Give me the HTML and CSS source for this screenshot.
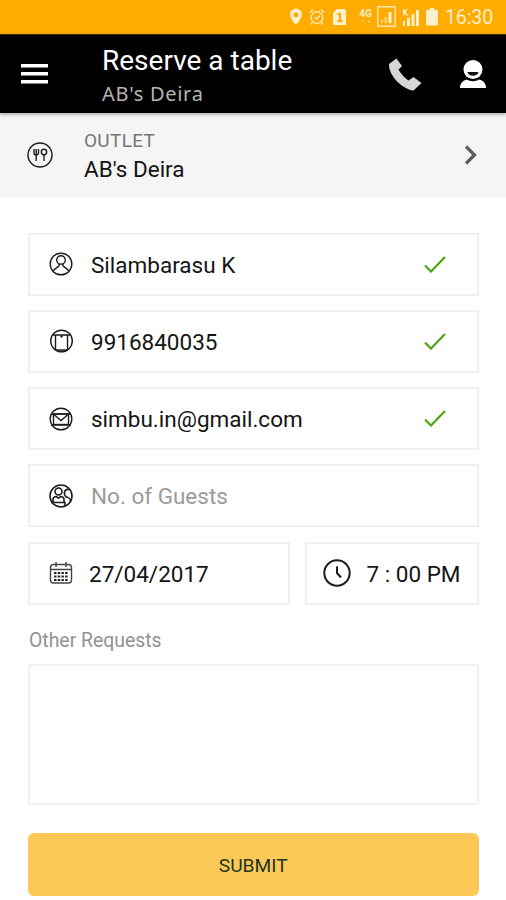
FILE: index.html
```html
<!DOCTYPE html>
<html lang="en">
<head>
<meta charset="utf-8">
<title>Reserve a table</title>
<link rel="stylesheet" href="styles.css">
</head>
<body>
<div class="status">
  <svg class="st-pin" width="14" height="18" viewBox="0 0 14 18"><path fill-rule="evenodd" d="M7 0.5A6 6 0 0 0 1 6.5C1 10.500 7 17 7 17S13 10.500 13 6.500A6 6 0 0 0 7 .5ZM7 4.200a2.500 2.500 0 1 1 0 5 2.500 2.500 0 0 1 0-5Z"/></svg>
  <svg class="st-alarm line" width="16" height="18" viewBox="0 0 16 18"><circle cx="8" cy="9.500" r="5.800"/><path d="M1 4.500 4 1.500M15 4.500 12 1.500M5.500 9l2 2 3.500-3.500M3.500 14.500 2 16.500M12.500 14.500 14 16.500"/></svg>
  <svg class="st-sim" width="13" height="18" viewBox="0 0 13 18"><path fill-rule="evenodd" d="M4 1H11.500L13 2.500V17H0V5ZM4.500 5V7H6V12H4.500V14H9.500V12H8V5Z"/></svg>
  <span class="st-net"><b>4G</b><svg width="12" height="5" viewBox="0 0 12 5"><path d="M1 1h4L3 4ZM7 4h4L9 1Z"/></svg></span>
  <svg class="st-box line" width="19" height="21" viewBox="0 0 19 21"><rect x=".8" y=".8" width="17.400" height="19.400"/><path class="solid faint" d="M4 14h2v3H4ZM7.500 11h2.500v6H7.500Z"/><path class="solid" d="M11.500 6h3v11h-3Z"/></svg>
  <svg class="st-signal" width="17" height="18" viewBox="0 0 17 18"><path d="M1 13h2v5H1ZM5 10h3v8H5ZM9.500 6h3v12h-3ZM14 2h3v16h-3ZM1 1h1.300v2L4 1h1.800L3.800 4l2.400 3.500H4.500L2.300 5v2.500H1Z"/></svg>
  <svg class="st-battery" width="12" height="18" viewBox="0 0 12 18"><path d="M3.500 0h5v2H12v15.500H0V2h3.500Z"/></svg>
  <span class="clock">16:30</span>
</div>
<header class="bar">
  <svg class="menu" width="27" height="20" viewBox="0 0 27 20"><path d="M0 0h27v3.500H0ZM0 8h27v3.500H0ZM0 16h27v3.500H0Z"/></svg>
  <div class="titles">
    <h1>Reserve a table</h1>
    <p>AB's Deira</p>
  </div>
  <svg class="phone" width="33" height="33" viewBox="0 0 33 33"><path d="M7.500.5 0 6C-.5 18 14 31.500 24.500 32.500L32.500 25 24.500 19 19.500 22.500C16 20 11.500 15.500 9.500 11.500L13 8Z"/></svg>
  <svg class="user" width="26" height="28" viewBox="0 0 26 28"><circle cx="13" cy="9.500" r="9.500"/><path d="M0 28c0-5 3-7.500 7-8.500 3 2.300 9 2.300 12 0 4 1 7 3.500 7 8.500Z"/><path class="smile" d="M7.500 12h11c-.5 5-10.500 5-11 0Z"/></svg>
</header>
<section class="outlet">
  <svg class="icon fork" width="26" height="26" viewBox="0 0 26 26"><circle cx="13" cy="13" r="12"/><path d="M7 7v4q0 2 2.200 2T11.500 11V7M9.200 7v12"/><circle cx="17" cy="10" r="2.700"/><path d="M17 12.700V19"/></svg>
  <div class="place">
    <span class="label">OUTLET</span>
    <span class="name">AB's Deira</span>
  </div>
  <svg class="chevron" width="14" height="20" viewBox="0 0 14 20"><path d="m2 1.500 8.500 8.500L2 18.500"/></svg>
</section>
<main class="form">
  <div class="field">
    <svg class="icon" width="24" height="24" viewBox="0 0 24 24"><circle cx="12" cy="12" r="10.800"/><circle cx="12" cy="8" r="4.300"/><path d="M4 19.500C6 16 9 15 10 14v-2M20 19.500C18 16 15 15 14 14v-2"/></svg>
    <span class="value">Silambarasu K</span>
    <svg class="check" width="22" height="17" viewBox="0 0 22 17"><path d="m1 9.500 6 6L21 1"/></svg>
  </div>
  <div class="field">
    <svg class="icon" width="24" height="24" viewBox="0 0 24 24"><circle cx="12.500" cy="12" r="10.800"/><path d="M6.500 20V6H18.500V20M4 6h17M7 21h11"/><path class="notch" d="M10.500 6.500h4L12.500 9Z"/></svg>
    <span class="value">9916840035</span>
    <svg class="check" width="22" height="17" viewBox="0 0 22 17"><path d="m1 9.500 6 6L21 1"/></svg>
  </div>
  <div class="field">
    <svg class="icon" width="24" height="24" viewBox="0 0 24 24"><circle cx="12" cy="12" r="10.800"/><rect x="4.500" y="7" width="15" height="10.500"/><path d="m5 7.500 7 6 7-6M2 7h20M2 18h20"/></svg>
    <span class="value">simbu.in@gmail.com</span>
    <svg class="check" width="22" height="17" viewBox="0 0 22 17"><path d="m1 9.500 6 6L21 1"/></svg>
  </div>
  <div class="field">
    <svg class="icon guests" width="24" height="24" viewBox="0 0 24 24"><circle cx="12" cy="12" r="11"/><circle cx="9.500" cy="7.500" r="3.500"/><path d="M4 18.500v-3q0-2.500 3-3l2.500 1.500 2.500-1.500q3 .5 3 3v3M20 5.500c-5-1-6 5-2.500 7.500M16.500 13c3 0 5 2 5 4M2 18.500h14V22"/></svg>
    <span class="value hint">No. of Guests</span>
  </div>
  <div class="pair">
    <div class="field">
      <svg class="icon calendar" width="24" height="24" viewBox="0 0 24 24"><rect x="1.500" y="3.500" width="21" height="18.500" rx="3"/><path d="M2 8.500h20M7 1v5M17 1v5"/><path class="dots" d="M5 12h14M5 15.500h14M5 19h14"/></svg>
      <span class="value t-date">27/04/2017</span>
    </div>
    <div class="field time">
      <svg class="icon clockface" width="28" height="28" viewBox="0 0 28 28"><circle cx="14" cy="14" r="12.700"/><path d="M14 7.500V14l4 4.500"/></svg>
      <span class="value t-time">7 : 00 PM</span>
    </div>
  </div>
  <label class="caption" for="requests">Other Requests</label>
  <textarea id="requests" class="requests"></textarea>
  <button class="submit" type="button">SUBMIT</button>
</main>
</body>
</html>
```

FILE: styles.css
```css
* { box-sizing: border-box; }
body { margin: 0; height: 900px; overflow: hidden; background: #fff; color: #141414; font-family: Roboto, sans-serif; }
svg { display: block; flex: none; }
h1, p { margin: 0; font-weight: 400; white-space: nowrap; }

.status { display: flex; align-items: center; height: 35px; padding: 0 10px 1px 289px; background: #ffab00; border-bottom: 1px solid #4a3000; color: #fff0cb; }
.status svg { fill: #fff0cb; }
.status .line { fill: none; stroke: #fff0cb; stroke-width: 1.3; }
.status .solid { fill: #fff0cb; stroke: none; }
.status .faint { opacity: .6; }
.st-alarm { margin-left: 6px; }
.st-sim { margin-left: 8px; }
.st-net { display: flex; flex-direction: column; align-items: center; width: 15px; margin-left: 12px; font-size: 10px; line-height: 10px; }
.st-net svg { opacity: .4; }
.st-box { margin-left: 4px; }
.st-signal { margin-left: 6px; }
.st-battery { margin-left: 7px; }
.clock { margin-left: 7px; font-size: 19.500px; line-height: 24px; padding-top: 2px; letter-spacing: -.1px; }

.bar { display: flex; align-items: center; height: 78px; padding: 0 20px 0 21px; background: #000; position: relative; box-shadow: 0 1px 4px rgba(0, 0, 0, .4); }
.menu { fill: #fff; }
.titles { width: 287px; margin-left: 54px; padding-top: 2px; }
.titles h1 { color: #fff; font-size: 28px; line-height: 32px; }
.titles p { color: #b5b5b5; font-family: "Noto Sans", sans-serif; font-size: 20px; line-height: 24px; letter-spacing: .7px; padding-top: 5px; }
.phone { fill: #d6d6d6; }
.user { margin-left: 38px; fill: #fff; }
.smile { fill: #111; }

.outlet { display: flex; align-items: center; height: 84px; padding: 0 28px 0 27px; background: #f5f5f5; }
.place { display: flex; flex-direction: column; flex: 1; margin-left: 31px; padding-top: 1px; }
.label { color: #757575; font-size: 19px; line-height: 26px; letter-spacing: .3px; }
.name { font-size: 22.500px; line-height: 30px; }
.chevron { fill: none; stroke: #5c5c5c; stroke-width: 3.2; }
.icon { fill: none; stroke: #1d1d1d; stroke-width: 1.4; }

.form { display: flex; flex-direction: column; padding: 35.500px 27.500px 0 28px; }
.field { display: flex; align-items: center; flex: none; height: 63px; margin-bottom: 14.300px; padding: 0 31px 0 19px; border: 2px solid #efefef; }
.value { flex: 1; margin-left: 18px; padding-top: 1px; font-size: 22.500px; line-height: 30px; white-space: nowrap; }
.hint { color: #9b9b9b; }
.check { fill: none; stroke: #4ca513; stroke-width: 2.200; }
.pair { display: grid; grid-template-columns: 262px 174px; justify-content: space-between; }
.t-date { margin-left: 16px; }
.guests { stroke-width: 1.6; }
.notch { fill: #1d1d1d; stroke: none; }
.calendar { stroke: #444; }
.dots { stroke: #222; stroke-width: 2; stroke-dasharray: 2.500 1.200; }
.time { padding: 0 0 0 16px; }
.clockface { stroke-width: 2; }
.t-time { margin-left: 16px; }
.caption { height: 45px; padding: 9px 0 0 1px; color: #929292; font-size: 19.400px; line-height: 26px; }
.requests { height: 141px; margin: 0; padding: 12px; border: 2px solid #f1f1f1; border-radius: 2px; resize: none; background: #fff; font: 20px Roboto, sans-serif; outline: 0; }
.submit { height: 63px; margin-top: 28px; padding: 2px 0 0; border: 0; border-radius: 6px; background: #fcc956; color: #24341f; font: 19.200px Roboto, sans-serif; }
```
